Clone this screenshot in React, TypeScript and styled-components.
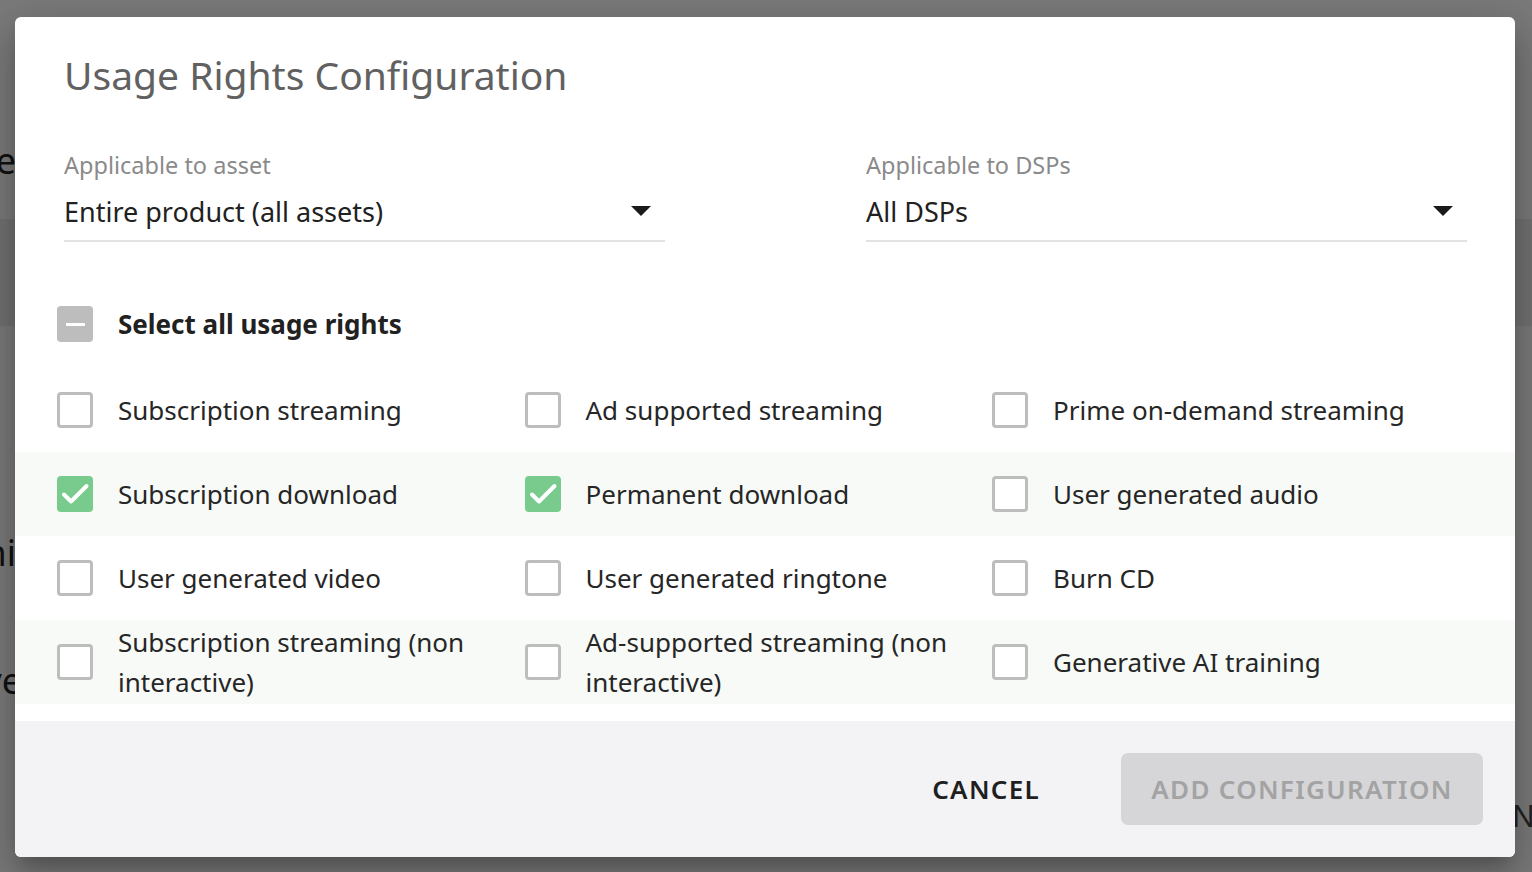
import React, { useState } from 'react';
import styled, { createGlobalStyle } from 'styled-components';

const GlobalStyle = createGlobalStyle`
    html, body, #root {
        margin: 0;
        padding: 0;
        width: 100%;
        height: 100%;
    }
    body {
        font-family: 'Noto Sans', 'Lato', sans-serif;
        overflow: hidden;
    }
`;

const RIGHTS = [
    'Subscription streaming',
    'Ad supported streaming',
    'Prime on-demand streaming',
    'Subscription download',
    'Permanent download',
    'User generated audio',
    'User generated video',
    'User generated ringtone',
    'Burn CD',
    'Subscription streaming (non interactive)',
    'Ad-supported streaming (non interactive)',
    'Generative AI training',
];

const Page = styled.div`
    position: relative;
    width: 1532px;
    height: 872px;
    background: #f4f4f4;
    overflow: hidden;
`;

// page text sitting under the overlay, mostly hidden by the dialog
const PageText = styled.span<{ top: number; edge?: number }>`
    position: absolute;
    right: calc(100% - ${(p) => p.edge ?? 16}px);
    top: ${(p) => p.top}px;
    font-size: 36px;
    color: #222;
    white-space: nowrap;
`;

const PageBand = styled.div`
    position: absolute;
    left: 0;
    right: 0;
    top: 219px;
    height: 107px;
    background: #e2e2e2;
`;

const PageTextRight = styled.span`
    position: absolute;
    left: 1512px;
    top: 795px;
    font-size: 30px;
    color: #444;
`;

const Backdrop = styled.div`
    position: absolute;
    inset: 0;
    background: rgba(0, 0, 0, 0.5);
    display: flex;
    align-items: flex-start;
    justify-content: flex-start;
    padding: 17px 0 0 15px;
    box-sizing: border-box;
`;

const Dialog = styled.div`
    width: 1500px;
    height: 840px;
    background: #fff;
    border-radius: 6px;
    box-shadow: 0 11px 15px -7px rgba(0, 0, 0, 0.2), 0 24px 38px 3px rgba(0, 0, 0, 0.14),
        0 9px 46px 8px rgba(0, 0, 0, 0.12);
    display: flex;
    flex-direction: column;
    overflow: hidden;
`;

const Body = styled.div`
    flex: 1;
    display: flex;
    flex-direction: column;
`;

const Title = styled.h2`
    margin: 0;
    padding: 32px 49px 0;
    font-size: 39px;
    line-height: 52px;
    font-weight: 400;
    color: #616161;
`;

const Fields = styled.div`
    display: grid;
    grid-template-columns: 601px 601px;
    column-gap: 201px;
    padding: 48px 49px 0;
`;

const Field = styled.div`
    display: flex;
    flex-direction: column;
`;

const Label = styled.label`
    font-size: 23.5px;
    line-height: 32px;
    color: #8a8a8a;
`;

const SelectBox = styled.div`
    display: flex;
    align-items: center;
    justify-content: space-between;
    margin-top: 7px;
    height: 46px;
    border-bottom: 2px solid #e2e2e2;
    padding-bottom: 6px;
    font-size: 27px;
    color: #212121;
    cursor: pointer;
`;

const Caret = styled.span`
    width: 0;
    height: 0;
    margin-right: 14px;
    border-left: 10px solid transparent;
    border-right: 10px solid transparent;
    border-top: 10px solid #1a1a1a;
`;

const SelectAllRow = styled.div`
    display: flex;
    align-items: center;
    gap: 25px;
    padding: 64px 42px 26px;
`;

const SelectAllText = styled.span`
    font-size: 26px;
    font-weight: 700;
    color: #212121;
`;

const Grid = styled.div`
    display: flex;
    flex-direction: column;
`;

const Row = styled.div<{ $tinted: boolean }>`
    display: grid;
    grid-template-columns: repeat(3, 467.5px);
    height: 84px;
    padding-left: 42px;
    background: ${(p) => (p.$tinted ? '#f7faf7' : '#fff')};
`;

const Item = styled.label`
    display: flex;
    align-items: center;
    gap: 25px;
    cursor: pointer;
`;

const ItemText = styled.span`
    font-size: 26px;
    line-height: 40px;
    color: #262626;
    max-width: 380px;
`;

const Box = styled.span<{ $checked?: boolean; $mixed?: boolean }>`
    flex: none;
    width: 36px;
    height: 36px;
    box-sizing: border-box;
    border-radius: 4px;
    border: ${(p) => (p.$checked || p.$mixed ? 'none' : '3px solid #bdbdbd')};
    background: ${(p) => (p.$checked ? '#78cb8c' : p.$mixed ? '#bdbdbd' : '#fff')};
    display: flex;
    align-items: center;
    justify-content: center;
`;

const Dash = styled.span`
    width: 19px;
    height: 3px;
    background: #fff;
`;

const Footer = styled.div`
    height: 136px;
    flex: none;
    background: #f3f3f5;
    display: flex;
    align-items: center;
    justify-content: flex-end;
    gap: 69px;
    padding-right: 32px;
`;

const TextButton = styled.button`
    background: none;
    border: none;
    font-family: inherit;
    font-size: 26px;
    font-weight: 600;
    letter-spacing: 1.3px;
    color: #1f1f1f;
    padding: 12px;
    cursor: pointer;
`;

const PrimaryButton = styled.button`
    width: 362px;
    height: 72px;
    border: none;
    border-radius: 7px;
    background: #d6d6d8;
    color: #a3a3a3;
    font-family: inherit;
    font-size: 26px;
    font-weight: 600;
    letter-spacing: 1.3px;
    cursor: default;
`;

const Check = () => (
    <svg width="36" height="36" viewBox="0 0 36 36" fill="none">
        <path d="M7 18.5l7 7L29.5 10" stroke="#fff" strokeWidth="4" strokeLinecap="round" strokeLinejoin="round" />
    </svg>
);

const App = () => {
    const [checked, setChecked] = useState<Record<string, boolean>>({
        'Subscription download': true,
        'Permanent download': true,
    });

    const rows = [0, 1, 2, 3].map((r) => RIGHTS.slice(r * 3, r * 3 + 3));
    const anyChecked = Object.values(checked).some(Boolean);

    const toggle = (name: string) => setChecked((prev) => ({ ...prev, [name]: !prev[name] }));

    return (
        <>
            <GlobalStyle />
            <Page>
                <PageBand />
                <PageText top={136}>Usage rights schedule</PageText>
                <PageText top={528}>Licensed territories limi</PageText>
                <PageText top={656} edge={22}>Exclusive</PageText>
                <PageTextRight>N</PageTextRight>
                <Backdrop>
                    <Dialog>
                        <Body>
                            <Title>Usage Rights Configuration</Title>
                            <Fields>
                                <Field>
                                    <Label>Applicable to asset</Label>
                                    <SelectBox>
                                        Entire product (all assets)
                                        <Caret />
                                    </SelectBox>
                                </Field>
                                <Field>
                                    <Label>Applicable to DSPs</Label>
                                    <SelectBox>
                                        All DSPs
                                        <Caret />
                                    </SelectBox>
                                </Field>
                            </Fields>
                            <SelectAllRow>
                                <Box $mixed={anyChecked}>{anyChecked ? <Dash /> : null}</Box>
                                <SelectAllText>Select all usage rights</SelectAllText>
                            </SelectAllRow>
                            <Grid>
                                {rows.map((row, i) => (
                                    <Row key={i} $tinted={i % 2 === 1}>
                                        {row.map((name) => (
                                            <Item key={name} onClick={() => toggle(name)}>
                                                <Box $checked={!!checked[name]}>{checked[name] ? <Check /> : null}</Box>
                                                <ItemText>{name}</ItemText>
                                            </Item>
                                        ))}
                                    </Row>
                                ))}
                            </Grid>
                        </Body>
                        <Footer>
                            <TextButton>CANCEL</TextButton>
                            <PrimaryButton disabled>ADD CONFIGURATION</PrimaryButton>
                        </Footer>
                    </Dialog>
                </Backdrop>
            </Page>
        </>
    );
};

export default App;
